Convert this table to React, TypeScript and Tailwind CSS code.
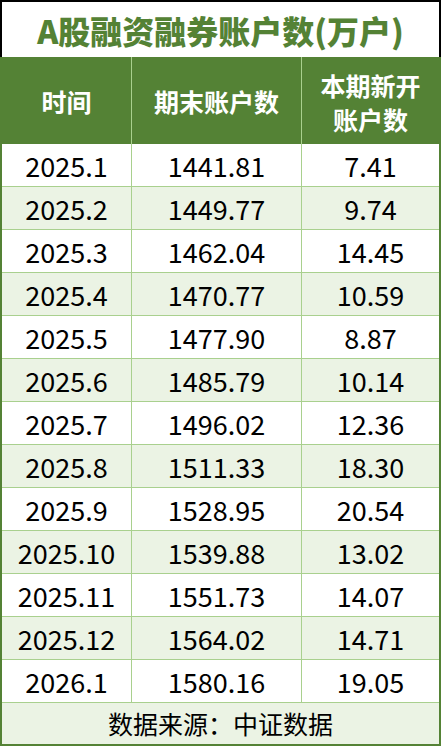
import React from "react";

const rows: [string, string, string][] = [
  ["2025.1", "1441.81", "7.41"],
  ["2025.2", "1449.77", "9.74"],
  ["2025.3", "1462.04", "14.45"],
  ["2025.4", "1470.77", "10.59"],
  ["2025.5", "1477.90", "8.87"],
  ["2025.6", "1485.79", "10.14"],
  ["2025.7", "1496.02", "12.36"],
  ["2025.8", "1511.33", "18.30"],
  ["2025.9", "1528.95", "20.54"],
  ["2025.10", "1539.88", "13.02"],
  ["2025.11", "1551.73", "14.07"],
  ["2025.12", "1564.02", "14.71"],
  ["2026.1", "1580.16", "19.05"],
];

export default function App() {
  return (
    <div
      className="w-[441px] h-[746px] flex flex-col bg-white"
      style={{ fontFamily: '"Noto Sans CJK SC", "Noto Sans", sans-serif' }}
    >
      <div className="h-[57px] shrink-0 border-t-2 border-x-2 border-black flex items-center justify-center">
        <span className="text-[32px] font-black text-[#548235] leading-none">
          A股融资融券账户数(万户)
        </span>
      </div>
      <div className="flex-1 flex flex-col border-x-2 border-b-2 border-[#548235]">
        <div className="h-[87px] shrink-0 grid grid-cols-[129px_1px_169px_1px_1fr] bg-[#548235] text-white font-bold text-[25px] leading-[34px]">
          <div className="flex items-center justify-center">时间</div>
          <div className="bg-[#a9d08e]" />
          <div className="flex items-center justify-center">期末账户数</div>
          <div className="bg-[#a9d08e]" />
          <div className="flex flex-col items-center justify-center pt-[2px]">
            <span>本期新开</span>
            <span>账户数</span>
          </div>
        </div>
        {rows.map((r, i) => (
          <div
            key={r[0]}
            className={
              "h-[43px] shrink-0 grid grid-cols-[129px_1px_169px_1px_1fr] border-b border-[#a9d08e] text-[27px] text-black leading-none " +
              (i % 2 === 1 ? "bg-[#ebf3e4]" : "bg-white")
            }
          >
            <div className="flex items-center justify-center">{r[0]}</div>
            <div className="bg-[#a9d08e]" />
            <div className="flex items-center justify-center">{r[1]}</div>
            <div className="bg-[#a9d08e]" />
            <div className="flex items-center justify-center">{r[2]}</div>
          </div>
        ))}
        <div className="flex-1 bg-[#ebf3e4] flex items-center justify-center text-[25px] text-black leading-none">
          数据来源：中证数据
        </div>
      </div>
    </div>
  );
}
